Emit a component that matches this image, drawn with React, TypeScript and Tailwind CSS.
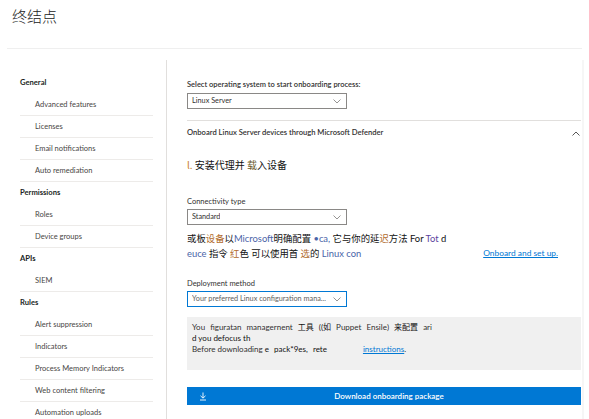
import React from "react";

const sans = { fontFamily: "Lato, 'Noto Sans', 'Noto Sans CJK SC', sans-serif" };
const cjk = { fontFamily: "'Noto Sans CJK SC', 'Noto Sans', sans-serif" };
const mixed = { fontFamily: "Lato, 'Noto Sans CJK SC', sans-serif" };

type Row = { t: string; h?: boolean };
const rows: Row[] = [
  { t: "General", h: true },
  { t: "Advanced features" },
  { t: "Licenses" },
  { t: "Email notifications" },
  { t: "Auto remediation" },
  { t: "Permissions", h: true },
  { t: "Roles" },
  { t: "Device groups" },
  { t: "APIs", h: true },
  { t: "SIEM" },
  { t: "Rules", h: true },
  { t: "Alert suppression" },
  { t: "Indicators" },
  { t: "Process Memory Indicators" },
  { t: "Web content filtering" },
  { t: "Automation uploads" },
];

function Chevron({ up = false }: { up?: boolean }) {
  return (
    <svg width="8" height="5" viewBox="0 0 8 5" className="shrink-0">
      <path
        d={up ? "M0.5 4.5 L4 1 L7.5 4.5" : "M0.5 0.5 L4 4 L7.5 0.5"}
        fill="none"
        stroke={up ? "#444" : "#8a8886"}
        strokeWidth="0.9"
      />
    </svg>
  );
}

function Select({ text, focus = false }: { text: string; focus?: boolean }) {
  return (
    <div
      className={`flex h-[16px] w-[160px] items-center justify-between border pl-[4px] pr-[5px] text-[7.3px] ${
        focus ? "border-[#0078d4] text-[#605e5c]" : "border-[#8a8886] text-[#323130]"
      }`}
    >
      <span className="truncate">{text}</span>
      <Chevron />
    </div>
  );
}

export default function App() {
  return (
    <div className="relative h-[419px] w-[589px] overflow-hidden bg-white text-[#323130]" style={sans}>
      {/* header */}
      <div className="mx-[7px] h-[49px] border-b border-[#efefef] pl-[5px] pt-[7px]">
        <div className="text-[15px] font-light leading-[17px] text-[#222]" style={cjk}>
          终结点
        </div>
      </div>

      <div className="mt-[11px] flex">
        {/* sidebar */}
        <div className="h-[380px] w-[167px] shrink-0 border-r border-[#e1dfdd] pl-[20px] pr-[13px] pt-[12px]">
          {rows.map((r, i) =>
            r.h ? (
              <div key={i} className="flex h-[22px] items-center text-[7.6px] font-bold text-[#201f1e]">
                {r.t}
              </div>
            ) : (
              <div
                key={i}
                className="flex h-[22px] items-center border-b border-[#edebe9] pl-[15px] text-[7.5px] text-[#484644]"
              >
                {r.t}
              </div>
            )
          )}
        </div>

        {/* main */}
        <div className="w-[414px] shrink-0 pl-[20px] pt-[20px]">
          <div className="h-[10px] text-[7.5px] font-semibold leading-[10px] text-[#323130]">
            Select operating system to start onboarding process:
          </div>
          <div className="mt-[3px]">
            <Select text="Linux Server" />
          </div>
          <div className="mt-[11px] border-t border-[#e1dfdd]" />
          <div className="mt-[7px] flex h-[10px] items-center justify-between pr-[1px] text-[7.6px] font-semibold text-[#323130]">
            <span>Onboard Linux Server devices through Microsoft Defender</span>
            <Chevron up />
          </div>

          <div className="mt-[20px] h-[14px] text-[10px] leading-[14px] text-[#111]" style={cjk}>
            <span className="text-[#c77b1b]">l.</span> 安装代理并 <span className="text-[#6b5a2a]">载</span>入设备
          </div>

          <div className="mt-[25px] h-[10px] text-[7.5px] leading-[10px] text-[#323130]">Connectivity type</div>
          <div className="mt-[2px]">
            <Select text="Standard" />
          </div>

          <div className="mt-[6px] text-[9.4px] leading-[15px] text-[#111]" style={mixed}>
            <div className="whitespace-nowrap">
              或板<span className="text-[#b06a2a]">设备</span>以<span className="text-[#4a64a8]">Microsoft</span>明确配置{" "}
              <span className="text-[#4a64a8]">•ca,</span> 它与你的延<span className="text-[#b06a2a]">迟</span>方法 For{" "}
              <span className="text-[#5b3fa0]">Tot</span> d
            </div>
            <div className="flex w-[371px] items-center justify-between whitespace-nowrap">
              <span>
                <span className="text-[#4a64a8]">euce</span> 指令 <span className="text-[#b06a2a]">红</span>色 可以使用首{" "}
                <span className="text-[#b06a2a]">选</span>的 <span className="text-[#4a64a8]">Linux con</span>
              </span>
              <a className="text-[8.4px] text-[#0078d4] underline" style={sans}>
                Onboard and set up.
              </a>
            </div>
          </div>

          <div className="mt-[18px] h-[10px] text-[7.5px] leading-[10px] text-[#323130]">Deployment method</div>
          <div className="mt-[2px]">
            <Select text="Your preferred Linux configuration mana..." focus />
          </div>

          <div className="mt-[10px] h-[53px] w-[394px] bg-[#f0f0f0] pl-[5px] pt-[5px] text-[8px] leading-[11px] text-[#323130]" style={mixed}>
            <div className="whitespace-nowrap [word-spacing:3px]">
              You figuratan managernent <span className="text-[#111]">工具 ((如</span> Puppet Ensile){" "}
              <span className="text-[#111]">来配置</span> ari
            </div>
            <div className="text-[#111]">d you defocus th</div>
            <div className="whitespace-nowrap">
              Before downloading <span className="text-[#111] [word-spacing:3px]">e pack*9es, rete</span>
              <span className="ml-[36px] text-[#0078d4] underline">instructions</span>.
            </div>
          </div>

          <div className="mt-[17px] flex h-[18px] w-[394px] items-center bg-[#0078d4] text-white">
            <svg width="8" height="9" viewBox="0 0 8 9" className="ml-[12px] shrink-0">
              <path d="M4 0.5 V6 M1.5 3.8 L4 6.2 L6.5 3.8 M1 8 H7" fill="none" stroke="#fff" strokeWidth="0.9" />
            </svg>
            <span className="flex-1 pr-[10px] text-center text-[8px] font-semibold">Download onboarding package</span>
          </div>
        </div>
        <div className="ml-[1px] h-[380px] w-[2px] bg-[#f6f6f6]" />
      </div>
    </div>
  );
}
